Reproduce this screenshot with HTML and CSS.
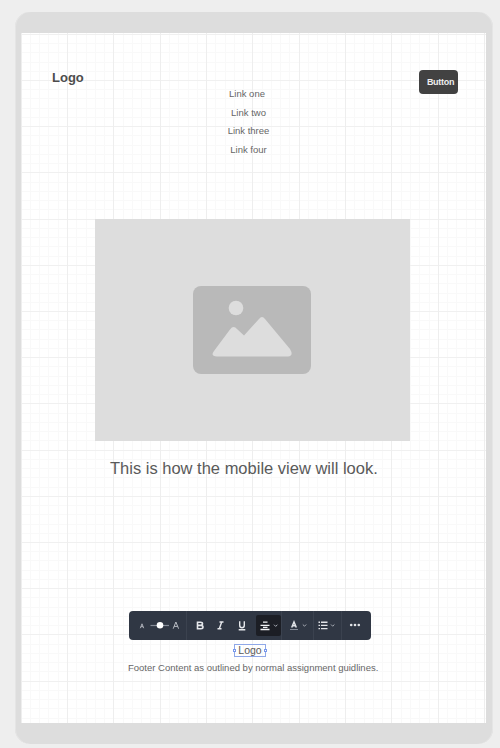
FILE: index.html
```html
<!DOCTYPE html>
<html lang="en">
<head>
<meta charset="utf-8">
<title>Mobile wireframe</title>
<link rel="stylesheet" href="styles.css">
</head>
<body>
<div class="device">
  <main class="screen">
    <header class="header">
      <div class="logo">Logo</div>
      <nav class="links"><a>Link one</a><a>Link two</a><a>Link three</a><a>Link four</a></nav>
      <button class="button">Button</button>
    </header>
    <div class="image">
      <svg width="118" height="88" viewBox="0 0 118 88">
        <rect width="118" height="88" rx="8" fill="#b9b9b9"/>
        <circle cx="43" cy="22" r="7.3" fill="#dddddd"/>
        <path d="M21 65 37 43.500Q40.500 39 44 43L51 49.500 66 33Q69 29 72 33L97 63Q101 70 95 70.500H24Q17 70 21 65Z" fill="#dddddd"/>
      </svg>
    </div>
    <h1 class="caption">This is how the mobile view will look.</h1>
    <div class="toolbar">
      <div class="group size">
        <svg width="56" height="28" viewBox="0 0 56 28" fill="none" stroke="#c5c8cf">
          <path d="m11.300 17.200 1.700-4.400 1.700 4.400m-2.800-1.500h2.200" stroke-width=".8"/>
          <path d="M21.500 14.500H40" stroke="#858b97" stroke-width="1.200"/>
          <circle cx="31" cy="14.300" r="3.300" fill="#fff" stroke="none"/>
          <path d="m44.200 17.700 2.700-6.700 2.700 6.700m-4.400-2.300h3.400" stroke-width=".9"/>
        </svg>
      </div>
      <div class="group style">
        <svg width="69" height="28" viewBox="0 0 69 28" fill="none" stroke="#e6e8ec" stroke-width="1.600">
          <path d="M10.500 11.200h3q2 0 2 1.600t-2 1.600h-3zm0 3.200h3.400q2.100 0 2.100 1.700t-2.100 1.700h-3.400z"/>
          <path d="M32.500 11h4M30.500 17.800h4M34.700 11l-2.400 6.800" stroke-width="1.400"/>
          <path d="M52.700 10.200v4q0 2.500 2.300 2.500t2.300-2.500v-4M51.700 18.700h6.600" stroke-width="1.400"/>
        </svg>
      </div>
      <div class="group align">
        <svg width="25" height="21" viewBox="0 0 25 21" fill="none" stroke="#f2f3f5">
          <path d="M7 7.200h4.500M4.500 10.300h9M7 12.400h4.500M4.500 14.500h9" stroke-width="1.300"/>
          <path d="m18 9.700 1.700 1.700 1.700-1.700" stroke="#a9adb6"/>
        </svg>
      </div>
      <div class="group color">
        <svg width="32" height="28" viewBox="0 0 32 28" fill="none" stroke="#e2e4e8">
          <path d="m9.700 16.500 2.300-5.500 2.300 5.500m-3.900-1.800h3.200" stroke-width="1.500"/>
          <path d="M8 18.500h8" stroke="#858b97"/>
          <path d="m20.800 13.500 1.700 1.700 1.700-1.700" stroke="#a9adb6"/>
        </svg>
      </div>
      <div class="group list">
        <svg width="28" height="28" viewBox="0 0 28 28" fill="none" stroke="#e2e4e8">
          <path d="M4.500 11.200h1.500m1 0H13.500M4.500 14.400h1.500m1 0H13.500M4.500 17.600h1.500m1 0H13.500" stroke-width="1.400"/>
          <path d="m17 13.500 1.700 1.700 1.700-1.700" stroke="#a9adb6"/>
        </svg>
      </div>
      <div class="group more">
        <svg width="28" height="28" viewBox="0 0 28 28" fill="#e2e4e8"><circle cx="9.200" cy="14" r="1.300"/><circle cx="13" cy="14" r="1.300"/><circle cx="16.800" cy="14" r="1.300"/></svg>
      </div>
    </div>
    <footer class="footer">
      <div class="selected">Logo</div>
      <p class="footer-text">Footer Content as outlined by normal assignment guidlines.</p>
    </footer>
  </main>
</div>
</body>
</html>
```
FILE: styles.css
```css
*, *::before, *::after { box-sizing: border-box; }
body {
  margin: 0;
  height: 748px;
  padding: 12px 7px 4px 15px;
  overflow: hidden;
  background: #eeeeee;
  color: #5a5a5a;
  font-family: "Liberation Sans", Arial, sans-serif;
}
.device {
  height: 732px;
  padding: 21px 7px 21px 6px;
  border-radius: 15px;
  background: #dddddd;
  box-shadow: inset 1px 0 #e5e5e5, inset -1px 0 #e5e5e5;
}
.screen {
  height: 690px;
  display: flex;
  flex-direction: column;
  background-color: #fff;
  background-image:
    repeating-linear-gradient(90deg, #eeeeee 0 1px, transparent 1px 46.350px),
    repeating-linear-gradient(#f0f0f0 0 1px, transparent 1px 46.200px),
    repeating-linear-gradient(90deg, #f9f9f9 0 1px, transparent 1px 9.270px),
    repeating-linear-gradient(#f9f9f9 0 1px, transparent 1px 9.240px);
  background-size: 600px 800px;
  background-repeat: no-repeat;
  background-position: -.35px 0, 0 -45.400px, -.35px 0, 0 -45.400px;
}
.header {
  height: 186px;
  padding: 36px 28px 0 31px;
  display: grid;
  grid-template-columns: 100px 1fr 39px;
  align-items: start;
}
.logo { font-weight: bold; font-size: 13px; line-height: 17px; color: #4d4d4d; }
.links {
  width: 60px;
  margin: 16px 0 0 66.500px;
  display: flex;
  flex-direction: column;
  align-items: center;
  font-size: 9.500px;
  line-height: 18.500px;
  white-space: nowrap;
  color: #666;
}
.links a:nth-child(1) { margin-right: 3px; }
.button {
  width: 39px;
  height: 24px;
  margin-top: 1px;
  padding: 0 0 0 4px;
  border: 0;
  border-radius: 4px;
  background: #424242;
  color: #eee;
  font: bold 9px/24px "Liberation Sans", sans-serif;
  letter-spacing: -.3px;
}
.image {
  width: 315px;
  height: 222px;
  margin-left: 74px;
  padding: 67px 0 0 98px;
  background: #dddddd;
}
.image svg, .toolbar svg { display: block; }
.caption {
  margin: 17px 0 0 89px;
  font-size: 16.500px;
  line-height: 20px;
  font-weight: normal;
  white-space: nowrap;
}
.toolbar {
  width: 242px;
  height: 29px;
  margin: 133px 0 0 108px;
  display: flex;
  border-radius: 4px;
  background: #303744;
}
.group + .group { border-left: 1px solid #3b424f; }
.size { width: 57px; }
.style { width: 70px; }
.align { width: 25px; height: 21px; margin-top: 4px; border-radius: 2px; background: #1c1e25; }
.toolbar .align { border-left: 0; }
.color { width: 32px; }
.list { width: 28px; }
.more { flex: 1; }
.footer { display: flex; flex-direction: column; padding-top: 4px; }
.selected {
  position: relative;
  width: 32px;
  height: 13px;
  margin-left: 213px;
  border: 1px solid #8fa8e8;
  font-size: 10.500px;
  line-height: 11px;
  text-align: center;
}
.selected::before, .selected::after {
  content: "";
  position: absolute;
  top: 4px;
  width: 3px;
  height: 3px;
  border: 1px solid #7898ec;
  background: #fff;
}
.selected::before { left: -2px; }
.selected::after { right: -2px; }
.footer-text {
  margin: 5px 0 0 107px;
  font-size: 9.500px;
  line-height: 12px;
  white-space: nowrap;
  color: #666;
}
```
